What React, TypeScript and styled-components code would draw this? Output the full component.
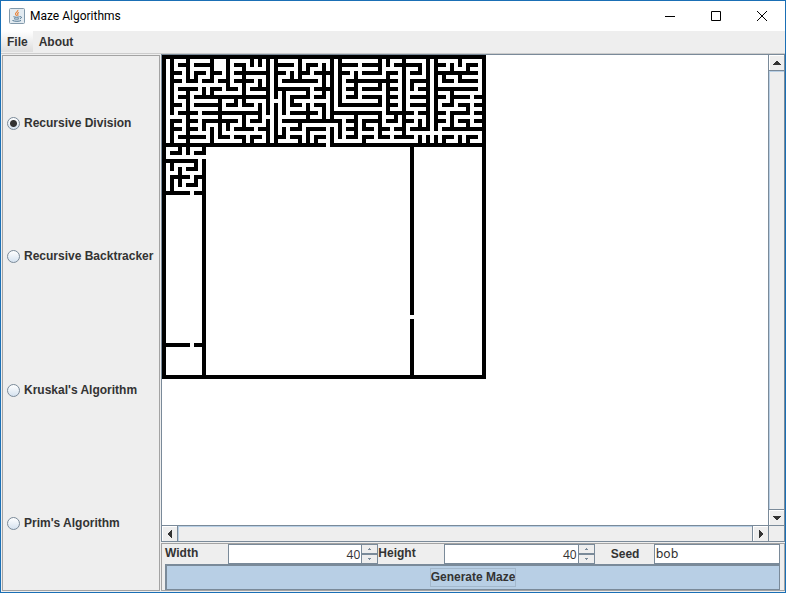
import React from "react";
import styled, { createGlobalStyle } from "styled-components";

const edge = "#7a8a99";
const face = "#eeeeee";
const etched = "#a3a3a3";
const ink = "#333333";

const GlobalStyle = createGlobalStyle`
  * { box-sizing: border-box; }
  body { margin: 0; background: ${face}; }
  button, input { font: inherit; color: inherit; margin: 0; padding: 0; border-radius: 0; }
`;

const Window = styled.div`
  display: flex;
  flex-direction: column;
  min-height: 100vh;
  border: 1px solid #1a6fb5;
  background: ${face};
  color: ${ink};
  font: bold 12px/15px "Liberation Sans", Arial, sans-serif;
`;

const TitleBar = styled.header`
  display: flex;
  align-items: center;
  height: 30px;
  padding-left: 8px;
  background: #ffffff;
  color: #000000;
`;

const Title = styled.h1`
  flex: 1;
  margin: 0 0 0 5px;
  font: 12px/16px Roboto, "Noto Sans", sans-serif;
`;

const CaptionButton = styled.button`
  display: grid;
  place-items: center;
  width: 46px;
  height: 30px;
  border: 0;
  background: transparent;
`;

const MenuBar = styled.nav`
  display: flex;
  height: 23px;
  border-bottom: 1px solid #cccccc;
`;

const MenuButton = styled.button<{ $lit?: boolean }>`
  height: 21px;
  padding: 1px 5px 0 6px;
  border: 0;
  background: ${(p) => (p.$lit ? "linear-gradient(#ffffff, #dddddd)" : "transparent")};
`;

const Body = styled.main`
  flex: 1;
  display: grid;
  grid-template-columns: 159px minmax(0, 1fr);
  padding-bottom: 1px;
`;

const AlgorithmPanel = styled.div`
  display: grid;
  grid-template-rows: repeat(4, 1fr);
  margin: 1px 0 0 1px;
  padding: 1px 0 0 4px;
  border: 1px solid ${etched};
`;

const RadioLabel = styled.label`
  display: flex;
  align-items: center;
  gap: 4px;
  white-space: nowrap;
`;

const Radio = styled.input`
  appearance: none;
  width: 13px;
  height: 13px;
  margin: 0;
  border: 1px solid ${edge};
  border-radius: 50%;
  background: linear-gradient(#ffffff, #d5e2ef);
  &:checked {
    background: radial-gradient(circle, ${ink} 0 3px, transparent 4px), linear-gradient(#ffffff, #d5e2ef);
  }
`;

const WorkArea = styled.div`
  display: flex;
  flex-direction: column;
  min-width: 0;
  padding-left: 1px;
`;

const ScrollPane = styled.section`
  flex: 1;
  display: grid;
  grid-template-columns: minmax(0, 1fr) 16px;
  grid-template-rows: minmax(0, 1fr) 16px;
  border: 1px solid ${edge};
`;

const Viewport = styled.div`
  overflow: hidden;
  background: #ffffff;
`;

const MazeDrawing = styled.svg`
  display: block;
`;

const ScrollBar = styled.div<{ $vertical?: boolean }>`
  display: flex;
  flex-direction: ${(p) => (p.$vertical ? "column" : "row")};
  border: 0 solid ${edge};
  border-left-width: ${(p) => (p.$vertical ? "1px" : "0")};
  border-top-width: ${(p) => (p.$vertical ? "0" : "1px")};
`;

const ScrollTrack = styled.div<{ $vertical?: boolean }>`
  flex: 1;
  border: 1px solid ${edge};
  border-width: ${(p) => (p.$vertical ? "1px 0" : "0 1px")};
  box-shadow: inset 1px 1px #b8cfe5;
`;

const ArrowButton = styled.button`
  display: grid;
  place-items: center;
  width: 15px;
  height: 15px;
  border: 0;
  background: ${face};
  box-shadow: inset 1px 1px #ffffff;
`;

const Corner = styled.div`
  border: 1px solid ${edge};
  border-width: 1px 0 0 1px;
`;

const Controls = styled.form`
  margin-top: 1px;
  padding: 0 4px 0 3px;
  border: 1px solid ${etched};
`;

const Fields = styled.div`
  display: grid;
  grid-template-columns: 63px 150fr 66px 150fr 59px 126fr;
  height: 20px;
`;

const FieldLabel = styled.label<{ $inset?: boolean }>`
  padding: ${(p) => (p.$inset ? "3px 0 0 16px" : "2px 0 0")};
`;

const TextBox = styled.input<{ $numeric?: boolean }>`
  flex: 1;
  width: 100%;
  min-width: 0;
  height: 20px;
  padding: ${(p) => (p.$numeric ? "1px 1px 0" : "0 1px")};
  border: 1px solid ${edge};
  background: #ffffff;
  font: 12px/15px ${(p) => (p.$numeric ? '"Open Sans"' : '"DejaVu Sans"')}, sans-serif;
  text-align: ${(p) => (p.$numeric ? "right" : "left")};
`;

const Spinner = styled.div`
  display: flex;
`;

const Steppers = styled.div`
  display: grid;
  grid-template-rows: 1fr 1fr;
  width: 16px;
`;

const StepButton = styled.button`
  display: grid;
  place-items: center;
  border: 1px solid ${edge};
  border-left-width: 0;
  background: ${face};
`;

const GenerateButton = styled.button`
  display: grid;
  place-items: center;
  width: 100%;
  height: 26px;
  border: 1px solid ${edge};
  border-width: 2px 1px 1px 2px;
  background: #b8cfe5;
  span {
    padding: 1px 0;
    outline: 1px solid #a3b8cc;
  }
`;

/* Wall cells of each row, as single columns or inclusive ranges. */
const wallRows: Record<number, string> = {
  0: "0-80",
  1: "0 2 6 12 16 22 24 26 28 34 42 44 54 56 60 66 68 74 80",
  2: "0 2 4-6 8-12 16 18-20 22 24 26 28-32 34 36-38 40 42 44-48 50-54 56 58-64 66 68-70 72 74 76-78 80",
  3: "0 2 6 12 16 20 26 28 34 36 40 42 44 54 60 64 66 68 72 76 80",
  4: "0 2-4 6 8-10 12-14 16 18-26 28-30 32 34-36 38-42 44-46 48 50-54 56-58 60 62-64 66 68-78 80",
  5: "0 2 6 8 12 16 20 26 28 32 34 40 42 44 48 56 60 66 68 70 74 80",
  6: "0 2-4 6-8 10-12 14-16 18-22 24 26 28 30-34 34-38 40 42 44 46-58 60 62-66 68 70-72 74-78 80",
  7: "0 2 16 20 24 26 28 40 42 44 48 54 56 60 62 66 68 80",
  8: "0 2 4-8 10 12-14 16-18 20 22-26 28-36 38-42 44 46-48 50-54 56-58 60 62 64-66 68-78 80",
  9: "0 2 6 10 12 20 26 28 30 36 40 42 44 48 56 60 66 68 72 80",
  10: "0 2 4-6 8-26 28 30 32-36 38-40 42 44 46-48 50-54 56-58 60 62-66 68-70 72-76 78-80",
  11: "0 2 6 14 18 20 26 30 32 42 44 54 56 60 66 68 72 80",
  12: "0 2-4 6 8-14 16-18 20-22 24 26 28 30 32-34 36 38-40 42 44-54 56-58 60 62-66 68 70-72 74-76 78-80",
  13: "0 2 6 14 24 26 28 30 36 40 42 56 60 66 68 76 80",
  14: "0 2 4-8 10-24 26 28 30 32-38 40 42-54 56-62 64-66 68-70 72-76 78-80",
  15: "0 6 14 20 24 28 36 40 42 48 54 58 60 66 68 72 80",
  16: "0 2-4 6-8 10-18 20 22-24 26 28 30-44 46-48 50-54 56-58 60-62 64 66 68-70 72 74-76 78-80",
  17: "0 2 6 10 14 16 20 26 28 34 44 48 50 54 60 64 66 68 72 76 80",
  18: "0 2-4 6-8 10 12 14 16 18-22 24-26 28 30 32-34 36-40 42 44 46-48 50-52 54-56 58-60 62-66 68 70-80",
  19: "0 2 6 12 14 26 28 30 36 42 44 48 54 60 80",
  20: "0 2 4-10 12 14-16 18-20 22-24 26 28-30 32-34 36 38-40 42 44 46-48 50-52 54-56 58-62 64 66 68 70-72 74 76-78 80",
  21: "0 2 6 12 20 22 26 28 34 36 38 42 50 64 66 68 70 74 76 80",
  22: "0-40 42-80",
  23: "0 4 6 10",
  24: "0 2-4 6 8-10",
  25: "0",
  26: "0-8 10",
  27: "0 2 8 10",
  28: "0 2 4 6-8 10",
  29: "0 4 10",
  30: "0 2-6 8-10",
  31: "0 2 4 8 10",
  32: "0 2 4 6-8 10",
  33: "0 2 10",
  34: "0-6 8-10",
  72: "0-6 8-10",
  80: "0-80",
};

function mazePath(): string {
  const parts: string[] = [];
  for (const [row, runs] of Object.entries(wallRows)) {
    for (const run of runs.split(" ")) {
      const [from, to = from] = run.split("-").map(Number);
      parts.push(`M${from} ${row}h${to - from + 1}v1h${from - to - 1}z`);
    }
  }
  parts.push("M0 23h1v57h-1zM80 23h1v57h-1zM10 35h1v45h-1zM62 23h1v42h-1zM62 66h1v14h-1z");
  return parts.join("");
}

const Maze = () => (
  <MazeDrawing width="324" height="324" viewBox="0 0 81 81" shapeRendering="crispEdges" role="img" aria-label="Maze">
    <path d={mazePath()} />
  </MazeDrawing>
);

const JavaIcon = () => (
  <svg width="16" height="16" viewBox="0 0 16 16" fill="none" aria-hidden="true">
    <rect x="0.5" y="0.5" width="15" height="15" rx="1" fill="#e3ebf1" stroke="#8299ab" />
    <path d="M8.8 2c.6 1.800-3 2.600-2.200 4.300.3.700.9 1 .9 1.700M10 4.500C8.500 5 8.300 5.800 8.800 6.500c.3.500.1 1-.3 1.300" stroke="#e8833a" strokeWidth="1.200" />
    <path d="M4.500 8.700c1.500.8 4.800.7 6 0M5 10.700c1.500.6 4 .6 5 0M10.800 8.800c2-.7 2.400 1.300 0 2M3.500 12.500c2 1 7 1 8.500 0" stroke="#4d7390" />
  </svg>
);

const arrows = {
  up: "M3 0h2v1h1v1h1v1h1v1h-8v-1h1v-1h1v-1h1z",
  down: "M0 0h8v1h-1v1h-1v1h-1v1h-2v-1h-1v-1h-1v-1h-1z",
  left: "M4 0v8h-1v-1h-1v-1h-1v-1h-1v-2h1v-1h1v-1h1v-1z",
  right: "M0 0v8h1v-1h1v-1h1v-1h1v-2h-1v-1h-1v-1h-1v-1z",
};

const Arrow = ({ to }: { to: keyof typeof arrows }) => {
  const flat = to === "up" || to === "down";
  const [w, h] = flat ? [8, 4] : [4, 8];
  return (
    <svg width={w} height={h} viewBox={`0 0 ${w} ${h}`} fill={ink} shapeRendering="crispEdges" aria-hidden="true">
      <path d={arrows[to]} />
    </svg>
  );
};

const NumberField = ({ id, value }: { id: string; value: number }) => (
  <Spinner>
    <TextBox id={id} $numeric inputMode="numeric" defaultValue={value} />
    <Steppers>
      <StepButton type="button" aria-label={`Increase ${id}`}>
        <svg width="3" height="2" viewBox="0 0 3 2" fill={edge} shapeRendering="crispEdges"><path d="M1 0h1v1h1v1h-3v-1h1z" /></svg>
      </StepButton>
      <StepButton type="button" aria-label={`Decrease ${id}`}>
        <svg width="3" height="2" viewBox="0 0 3 2" fill={edge} shapeRendering="crispEdges"><path d="M0 0h3v1h-1v1h-1v-1h-1z" /></svg>
      </StepButton>
    </Steppers>
  </Spinner>
);

const algorithms = ["Recursive Division", "Recursive Backtracker", "Kruskal's Algorithm", "Prim's Algorithm"];

export default function App() {
  return (
    <>
      <GlobalStyle />
      <Window>
        <TitleBar>
          <JavaIcon />
          <Title>Maze Algorithms</Title>
          <CaptionButton aria-label="Minimize">
            <svg width="10" height="10" viewBox="0 0 10 10" stroke="#000"><path d="M0 5.500h10" /></svg>
          </CaptionButton>
          <CaptionButton aria-label="Maximize">
            <svg width="10" height="10" viewBox="0 0 10 10" stroke="#000" fill="none"><path d="M.5.5h9v9h-9z" /></svg>
          </CaptionButton>
          <CaptionButton aria-label="Close">
            <svg width="10" height="10" viewBox="0 0 10 10" stroke="#000"><path d="M0 0l10 10M10 0L0 10" /></svg>
          </CaptionButton>
        </TitleBar>
        <MenuBar>
          <MenuButton $lit>File</MenuButton>
          <MenuButton>About</MenuButton>
        </MenuBar>
        <Body>
          <AlgorithmPanel role="radiogroup" aria-label="Algorithm">
            {algorithms.map((name, i) => (
              <RadioLabel key={name}>
                <Radio type="radio" name="algorithm" defaultChecked={i === 0} />
                {name}
              </RadioLabel>
            ))}
          </AlgorithmPanel>
          <WorkArea>
            <ScrollPane>
              <Viewport>
                <Maze />
              </Viewport>
              <ScrollBar $vertical>
                <ArrowButton aria-label="Scroll up"><Arrow to="up" /></ArrowButton>
                <ScrollTrack $vertical />
                <ArrowButton aria-label="Scroll down"><Arrow to="down" /></ArrowButton>
              </ScrollBar>
              <ScrollBar>
                <ArrowButton aria-label="Scroll left"><Arrow to="left" /></ArrowButton>
                <ScrollTrack />
                <ArrowButton aria-label="Scroll right"><Arrow to="right" /></ArrowButton>
              </ScrollBar>
              <Corner />
            </ScrollPane>
            <Controls onSubmit={(e) => e.preventDefault()}>
              <Fields>
                <FieldLabel htmlFor="width">Width</FieldLabel>
                <NumberField id="width" value={40} />
                <FieldLabel htmlFor="height">Height</FieldLabel>
                <NumberField id="height" value={40} />
                <FieldLabel htmlFor="seed" $inset>Seed</FieldLabel>
                <TextBox id="seed" defaultValue="bob" />
              </Fields>
              <GenerateButton type="submit"><span>Generate Maze</span></GenerateButton>
            </Controls>
          </WorkArea>
        </Body>
      </Window>
    </>
  );
}
